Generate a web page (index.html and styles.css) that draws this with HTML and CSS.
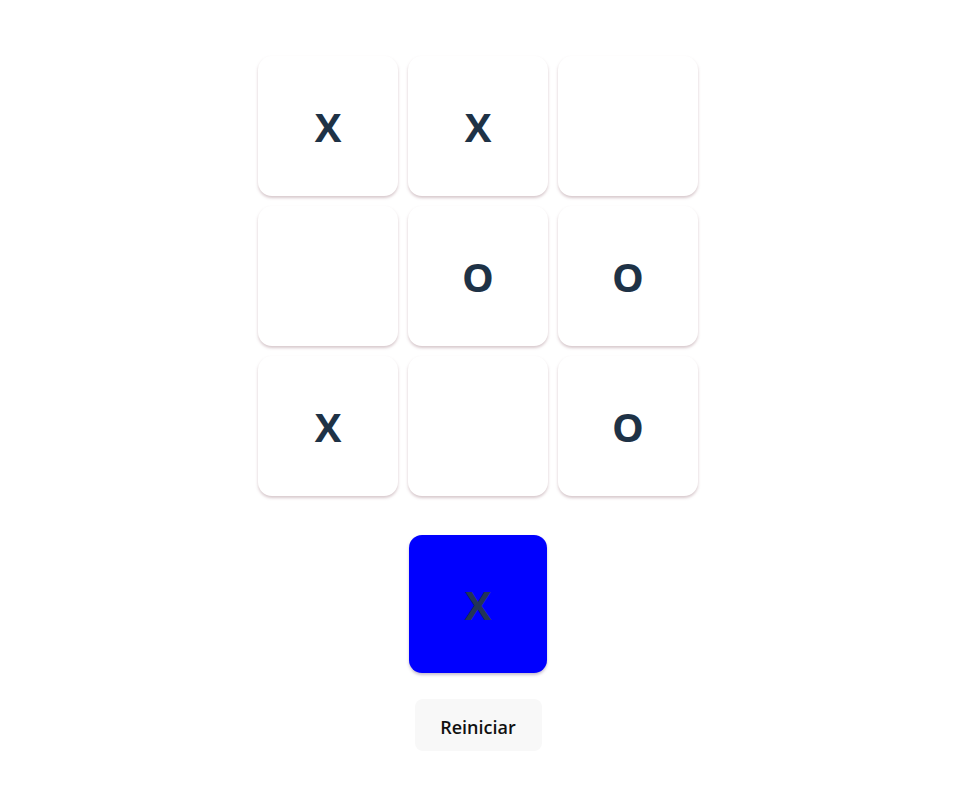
FILE: index.html
```html
<!DOCTYPE html>
<html lang="es">
<head>
<meta charset="utf-8">
<title>Tres en raya</title>
<link rel="stylesheet" href="styles.css">
</head>
<body>
<main class="game">
  <div class="board">
    <div class="cell">X</div>
    <div class="cell">X</div>
    <div class="cell"></div>
    <div class="cell"></div>
    <div class="cell">O</div>
    <div class="cell">O</div>
    <div class="cell">X</div>
    <div class="cell"></div>
    <div class="cell">O</div>
  </div>
  <div class="turn">X</div>
  <button class="reset">Reiniciar</button>
</main>
</body>
</html>
```
FILE: styles.css
```css
html, body {
  margin: 0;
  padding: 0;
  background: #ffffff;
}
body {
  font-family: "Open Sans", "Noto Sans", sans-serif;
}
.game {
  display: flex;
  flex-direction: column;
  align-items: center;
  padding-top: 56px;
  padding-right: 2px;
}
.board {
  display: grid;
  grid-template-columns: repeat(3, 140px);
  grid-auto-rows: 140px;
  gap: 10px;
}
.cell {
  background: #ffffff;
  border-radius: 14px;
  box-shadow: 0 2px 3px rgba(150, 110, 120, 0.38);
  display: flex;
  align-items: center;
  justify-content: center;
  font-weight: 700;
  font-size: 40px;
  color: #1e3246;
}
.turn {
  margin-top: 39px;
  width: 138px;
  height: 138px;
  background: #0000ff;
  border-radius: 13px;
  box-shadow: 0 2px 3px rgba(130, 110, 150, 0.45);
  display: flex;
  align-items: center;
  justify-content: center;
  font-weight: 700;
  font-size: 40px;
  color: #233457;
}
.reset {
  margin-top: 26px;
  width: 127px;
  height: 52px;
  border: none;
  border-radius: 8px;
  background: #f8f8f8;
  font-family: "Open Sans", "Noto Sans", sans-serif;
  font-weight: 600;
  font-size: 18px;
  color: #111111;
  padding: 3px 0 0 0;
}
```
